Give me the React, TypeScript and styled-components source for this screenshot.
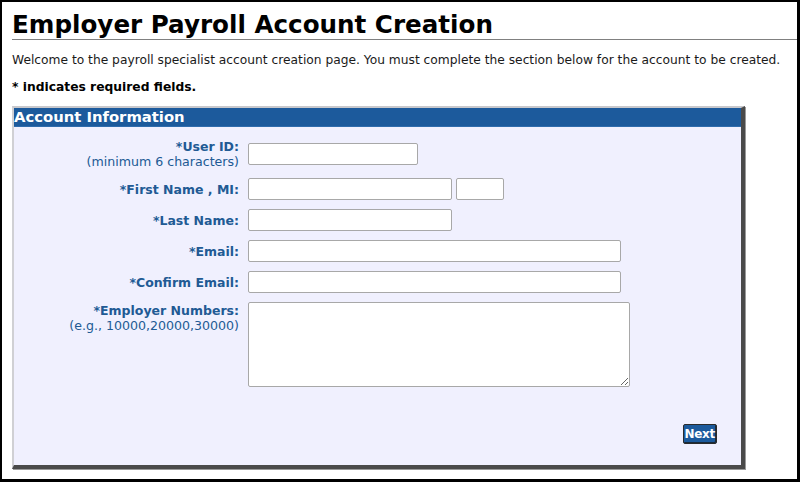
import React from "react";
import styled, { createGlobalStyle } from "styled-components";

const GlobalStyle = createGlobalStyle`
    html, body {
        margin: 0;
        padding: 0;
        background: #fff;
    }
    body {
        font-family: "DejaVu Sans", Verdana, sans-serif;
        font-size: 12.3px;
        color: #111;
    }
`

const Frame = styled.div`
    box-sizing: border-box;
    width: 800px;
    height: 482px;
    border-top: 2px solid #000;
    border-left: 2px solid #000;
    border-right: 3px solid #000;
    border-bottom: 3px solid #000;
    padding-left: 10px;
    overflow: hidden;
`

const Title = styled.h1`
    margin: 9px 0 0;
    padding-bottom: 0;
    font-size: 24.6px;
    font-weight: 700;
    line-height: 28px;
    color: #000;
    border-bottom: 1px solid #808080;
`

const Intro = styled.p`
    margin: 12px 0 0;
    line-height: 16px;
    font-size: 12.25px;
    color: #1a1a1a;
    white-space: nowrap;
`

const Required = styled.p`
    margin: 11px 0 0;
    font-weight: 700;
    line-height: 16px;
    color: #000;
`

const Panel = styled.section`
    width: 733px;
    box-sizing: border-box;
    margin-top: 11px;
    background: #f0f0fe;
    border-top: 2px solid #c8c8cc;
    border-left: 2px solid #d0d0d4;
    border-right: 4px solid #4a4a4a;
    border-bottom: 4px solid #4a4a4a;
    box-shadow: 1px 1px 0 #9a9a9a;
`

const PanelHeader = styled.h2`
    margin: 0;
    padding: 0;
    height: 18px;
    line-height: 18px;
    background: #1c5a9c;
    border-bottom: 1px solid #2f6cad;
    color: #fff;
    font-size: 14.8px;
    font-weight: 700;
`

const Form = styled.div`
    display: grid;
    grid-template-columns: 225px 1fr;
    column-gap: 9px;
    row-gap: 9px;
    align-items: center;
    padding: 12px 0 0;
`

const Label = styled.label<{ $top?: boolean }>`
    text-align: right;
    color: #215a94;
    font-size: 12.5px;
    line-height: 15px;
    align-self: ${(p) => (p.$top ? "start" : "center")};
    padding-top: ${(p) => (p.$top ? "1px" : "0")};
`

const LabelMain = styled.span`
    display: block;
    font-weight: 700;
`

const Hint = styled.span`
    display: block;
    font-weight: 400;
    font-size: 12.6px;
`

const Fields = styled.div`
    display: flex;
    gap: 4px;
`

const Input = styled.input<{ $w: number }>`
    box-sizing: border-box;
    width: ${(p) => p.$w}px;
    height: 22px;
    margin: 0;
    padding: 1px 3px;
    background: #fff;
    border: 1px solid #a8a8a8;
    border-radius: 2px;
    font-family: inherit;
    font-size: 13px;
`

const Area = styled.textarea`
    box-sizing: border-box;
    width: 382px;
    height: 85px;
    margin: 0;
    padding: 2px;
    background: #fff;
    border: 1px solid #a8a8a8;
    border-radius: 2px;
    font-family: inherit;
    font-size: 13px;
    display: block;
`

const Footer = styled.div`
    display: flex;
    justify-content: flex-end;
    padding: 37px 24px 21px 0;
`

const NextButton = styled.button`
    box-sizing: border-box;
    height: 20px;
    padding: 0 1px;
    background: #1c5a9c;
    border: 1px solid #2b2b2b;
    box-shadow: inset -1px -1px 0 #1a2a3a;
    border-radius: 2px;
    color: #fff;
    font-family: inherit;
    font-size: 12px;
    letter-spacing: -0.3px;
    font-weight: 700;
    line-height: 16px;
    cursor: pointer;
`

export default function App() {
    return (
        <>
            <GlobalStyle />
            <Frame>
                <Title>Employer Payroll Account Creation</Title>
                <Intro>
                    Welcome to the payroll specialist account creation page. You must complete the section below for the account to be created.
                </Intro>
                <Required>* indicates required fields.</Required>
                <Panel>
                    <PanelHeader>Account Information</PanelHeader>
                    <Form>
                        <Label htmlFor="uid">
                            <LabelMain>*User ID:</LabelMain>
                            <Hint>(minimum 6 characters)</Hint>
                        </Label>
                        <Fields>
                            <Input id="uid" $w={170} />
                        </Fields>

                        <Label htmlFor="fname">
                            <LabelMain>*First Name , MI:</LabelMain>
                        </Label>
                        <Fields>
                            <Input id="fname" $w={204} />
                            <Input $w={48} />
                        </Fields>

                        <Label htmlFor="lname">
                            <LabelMain>*Last Name:</LabelMain>
                        </Label>
                        <Fields>
                            <Input id="lname" $w={204} />
                        </Fields>

                        <Label htmlFor="email">
                            <LabelMain>*Email:</LabelMain>
                        </Label>
                        <Fields>
                            <Input id="email" $w={373} />
                        </Fields>

                        <Label htmlFor="email2">
                            <LabelMain>*Confirm Email:</LabelMain>
                        </Label>
                        <Fields>
                            <Input id="email2" $w={373} />
                        </Fields>

                        <Label htmlFor="emp" $top>
                            <LabelMain>*Employer Numbers:</LabelMain>
                            <Hint>(e.g., 10000,20000,30000)</Hint>
                        </Label>
                        <Fields>
                            <Area id="emp" />
                        </Fields>
                    </Form>
                    <Footer>
                        <NextButton type="button">Next</NextButton>
                    </Footer>
                </Panel>
            </Frame>
        </>
    )
}
